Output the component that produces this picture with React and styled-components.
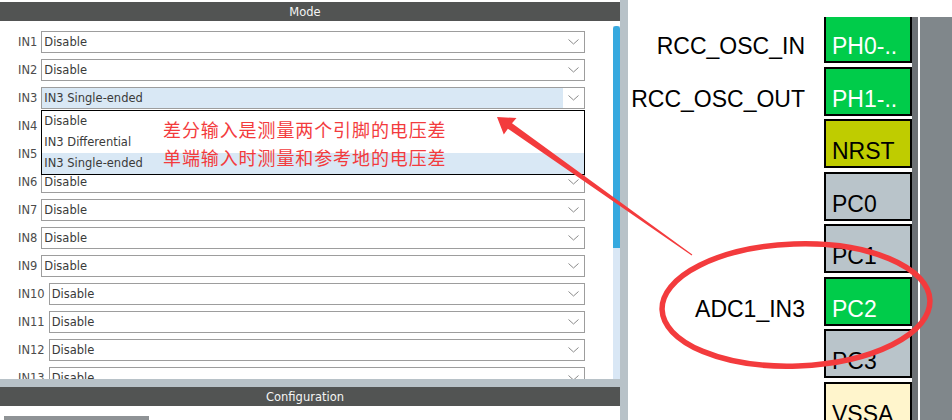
import React from "react";
import styled, { createGlobalStyle } from "styled-components";

const GlobalStyle = createGlobalStyle`
  html, body {
    margin: 0;
    padding: 0;
    background: #fff;
    overflow: hidden;
  }
`;

const UI_FONT = `"DejaVu Sans", "Liberation Sans", sans-serif`;
const PIN_FONT = `"Liberation Sans", Arial, sans-serif`;

const Screen = styled.div`
  position: relative;
  width: 952px;
  height: 420px;
  display: flex;
  overflow: hidden;
  background: #fff;
`;

const LeftPane = styled.div`
  width: 620px;
  display: flex;
  flex-direction: column;
  padding-top: 2px;
  box-sizing: border-box;
`;

const PanelHeader = styled.div`
  height: 19px;
  flex: none;
  background: #525453;
  color: #f4f4f4;
  font: 11.5px/20px ${UI_FONT};
  text-align: center;
  padding-right: 10px;
`;

const ModeBody = styled.div`
  height: 358px;
  flex: none;
  display: flex;
`;

const RowsArea = styled.div`
  flex: 1;
  overflow: hidden;
  padding: 10px 28px 0 18px;
  display: flex;
  flex-direction: column;
  gap: 6px;
`;

const Scrollbar = styled.div`
  width: 7px;
  background: linear-gradient(#fff 5px, #d9e7f5 5px);
  padding-top: 5px;
  box-sizing: border-box;
`;

const Thumb = styled.div`
  height: 222px;
  background: #36a9df;
  border-radius: 3px 3px 0 0;
`;

const Row = styled.div`
  display: flex;
  align-items: center;
  gap: 4px;
  height: 22px;
  flex: none;
`;

const Label = styled.span`
  font: 11.5px/22px ${UI_FONT};
  color: #4c4c4c;
  white-space: nowrap;
`;

const SelectBox = styled.div`
  position: relative;
  flex: 1;
  height: 22px;
  box-sizing: border-box;
  border: 1px solid #9d9d9d;
  background: #fff;
  display: flex;
`;

const SelectValue = styled.div`
  flex: 1;
  padding-left: 2px;
  background: ${(p) => (p.$active ? "#d9e8f5" : "#fff")};
  font: 11.5px/21px ${UI_FONT};
  color: #3a3a3a;
  white-space: nowrap;
`;

const SelectButton = styled.div`
  width: 21px;
  display: flex;
  align-items: center;
  justify-content: center;
`;

const Popup = styled.div`
  position: absolute;
  z-index: 2;
  left: -1px;
  right: -1px;
  top: 22px;
  border: 1px solid #000;
  background: #fff;
`;

const PopupItem = styled.div`
  height: 21px;
  padding-left: 2px;
  background: ${(p) => (p.$active ? "#d9e8f5" : "#fff")};
  font: 11.5px/21px ${UI_FONT};
  color: #3a3a3a;
`;

const HSplit = styled.div`
  height: 8px;
  flex: none;
  background: #b8c2c8;
`;

const ConfigBody = styled.div`
  flex: 1;
  padding: 10px 0 0 4px;
`;

const TabStub = styled.div`
  width: 145px;
  height: 4px;
  background: #8f9396;
`;

const VSplit = styled.div`
  width: 8px;
  background: #b8c2c8;
`;

const RightPane = styled.div`
  flex: 1;
  display: flex;
  padding-top: 17px;
  box-sizing: border-box;
`;

const PinArea = styled.div`
  flex: 1;
  overflow: hidden;
`;

const PinList = styled.div`
  margin-top: -3px;
  display: flex;
  flex-direction: column;
  gap: 3.5px;
`;

const PinRow = styled.div`
  display: flex;
  height: 49px;
  flex: none;
`;

const PinLabel = styled.div`
  flex: 1;
  align-self: flex-end;
  padding: 0 19px 5px 0;
  text-align: right;
  font: 23px/23px ${PIN_FONT};
  color: #000;
  white-space: nowrap;
`;

const pinColors = {
  green: ["#00cc4a", "#fff"],
  olive: ["#bfcc00", "#000"],
  grey: ["#b9c4ca", "#000"],
  power: ["#fff5cc", "#000"],
};

const Pin = styled.div`
  width: 88px;
  box-sizing: border-box;
  border: 2px solid #000;
  background: ${(p) => pinColors[p.$kind][0]};
  color: ${(p) => pinColors[p.$kind][1]};
  display: flex;
  align-items: flex-end;
  padding: 0 0 3px 6px;
  font: 23px/23px ${PIN_FONT};
  white-space: nowrap;
  overflow: hidden;
`;

const ChipEdge = styled.div`
  width: 6px;
  margin-right: 2px;
  background: #6d7175;
`;

const ChipBody = styled.div`
  width: 32px;
  background: #80878b;
`;

const Note = styled.div`
  position: absolute;
  z-index: 5;
  left: 163px;
  top: 115px;
  color: #f33b3d;
  font: 18px/28px "Noto Sans CJK SC", sans-serif;
  letter-spacing: 0.9px;
  white-space: nowrap;
`;

const Overlay = styled.svg`
  position: absolute;
  z-index: 6;
  left: 0;
  top: 0;
  pointer-events: none;
`;

const Chevron = () => (
  <svg width="11" height="6" viewBox="0 0 11 6">
    <polyline points="0.5,0.5 5.5,5 10.5,0.5" fill="none" stroke="#8a8a8a" strokeWidth="1" />
  </svg>
);

const Select = ({ value, active, options }) => (
  <SelectBox>
    <SelectValue $active={active}>{value}</SelectValue>
    <SelectButton>
      <Chevron />
    </SelectButton>
    {options && (
      <Popup>
        {options.map((o, i) => (
          <PopupItem key={o} $active={i === options.length - 1}>
            {o}
          </PopupItem>
        ))}
      </Popup>
    )}
  </SelectBox>
);

const inputs = Array.from({ length: 13 }, (_, i) => `IN${i + 1}`);

const pins = [
  { label: "RCC_OSC_IN", name: "PH0-..", kind: "green" },
  { label: "RCC_OSC_OUT", name: "PH1-..", kind: "green" },
  { label: "", name: "NRST", kind: "olive" },
  { label: "", name: "PC0", kind: "grey" },
  { label: "", name: "PC1", kind: "grey" },
  { label: "ADC1_IN3", name: "PC2", kind: "green" },
  { label: "", name: "PC3", kind: "grey" },
  { label: "", name: "VSSA", kind: "power" },
];

export default function App() {
  return (
    <Screen>
      <GlobalStyle />
      <LeftPane>
        <PanelHeader>Mode</PanelHeader>
        <ModeBody>
          <RowsArea>
            {inputs.map((name) =>
              name === "IN3" ? (
                <Row key={name}>
                  <Label>{name}</Label>
                  <Select
                    value="IN3 Single-ended"
                    active
                    options={["Disable", "IN3 Differential", "IN3 Single-ended"]}
                  />
                </Row>
              ) : (
                <Row key={name}>
                  <Label>{name}</Label>
                  <Select value="Disable" />
                </Row>
              )
            )}
          </RowsArea>
          <Scrollbar>
            <Thumb />
          </Scrollbar>
        </ModeBody>
        <HSplit />
        <PanelHeader>Configuration</PanelHeader>
        <ConfigBody>
          <TabStub />
        </ConfigBody>
      </LeftPane>
      <VSplit />
      <RightPane>
        <PinArea>
          <PinList>
            {pins.map((p) => (
              <PinRow key={p.name}>
                <PinLabel>{p.label}</PinLabel>
                <Pin $kind={p.kind}>{p.name}</Pin>
              </PinRow>
            ))}
          </PinList>
        </PinArea>
        <ChipEdge />
        <ChipBody />
      </RightPane>

      <Note>
        差分输入是测量两个引脚的电压差
        <br />
        单端输入时测量和参考地的电压差
      </Note>
      <Overlay width="952" height="420" viewBox="0 0 952 420">
        <polygon
          points="497,117 516.5,118 512,123.2 692.3,254.6 691.7,255.4 507.9,128.8 503.8,134.6"
          fill="#f33b3d"
        />
        <ellipse
          cx="796"
          cy="305"
          rx="134"
          ry="61"
          fill="none"
          stroke="#f33b3d"
          strokeWidth="5.5"
          transform="rotate(-2 796 305)"
        />
      </Overlay>
    </Screen>
  );
}
